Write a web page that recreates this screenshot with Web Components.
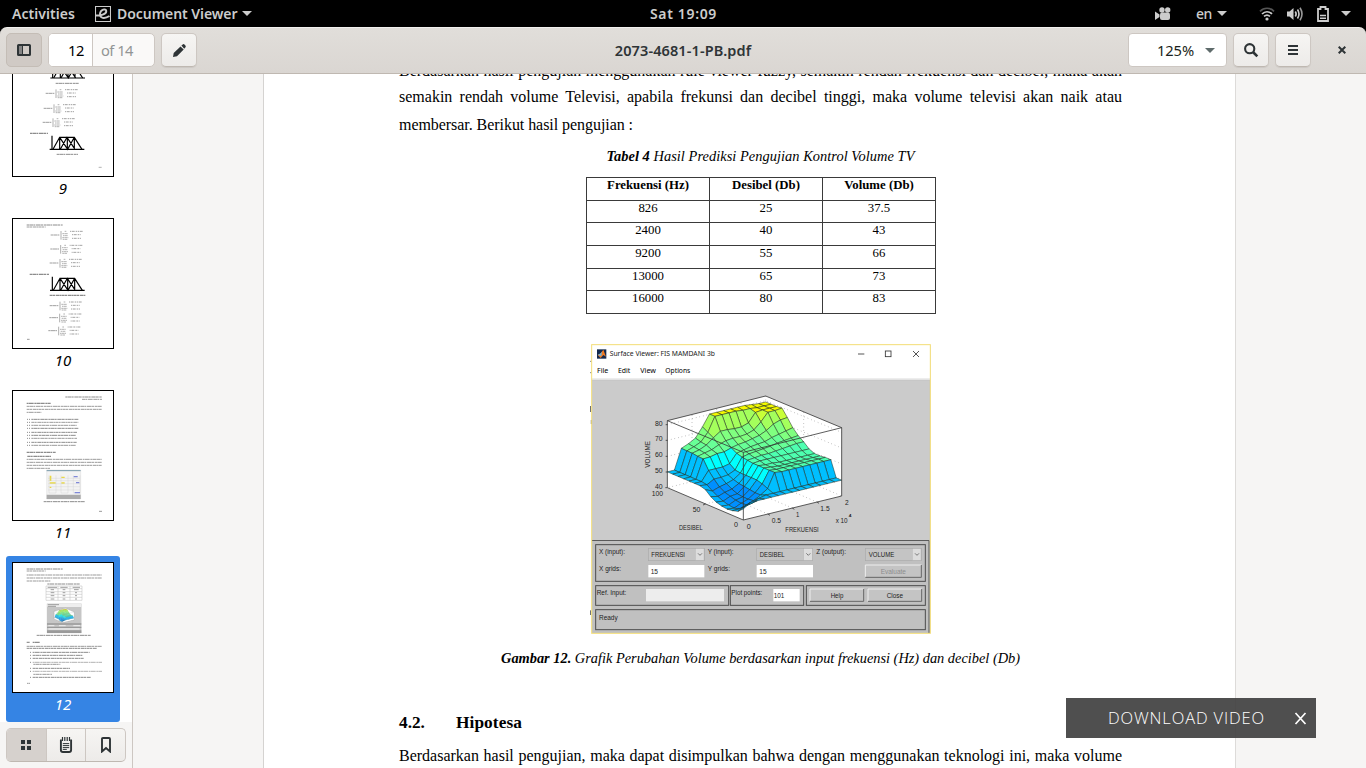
<!DOCTYPE html>
<html lang="id">
<head>
<meta charset="utf-8">
<title>2073-4681-1-PB.pdf</title>
<style>
html,body{margin:0;height:100%;overflow:hidden;background:#000}
body{font-family:"Noto Sans","Open Sans",sans-serif}
</style>
</head>
<body>
<viewer-desktop></viewer-desktop>
<script>
function define(name, html, setup) {
  customElements.define(name, class extends HTMLElement {
    connectedCallback() {
      if (this.shadowRoot) return;
      const root = this.attachShadow({mode: 'open'});
      root.innerHTML = typeof html === 'function' ? html(this) : html;
      if (setup) setup(this, root);
    }
  });
}

/* A single line of text whose tracking (or word gaps, with the "words" attribute) is adjusted to reach a given width. */
define('fit-text', '<style>:host{display:inline-block;white-space:nowrap}span{white-space:pre}</style><span><slot></slot></span>', (el, root) => {
  const w = parseFloat(el.getAttribute('w'));
  const span = root.querySelector('span');
  const text = el.textContent;
  const natural = span.getBoundingClientRect().width;
  if (w && natural) {
    if (el.hasAttribute('words')) span.style.wordSpacing = ((w - natural) / (text.split(' ').length - 1)).toFixed(3) + 'px';
    else span.style.letterSpacing = ((w - natural) / text.length).toFixed(3) + 'px';
  }
  el.style.width = w + 'px';
});

/* ---------- top panel ---------- */
define('top-panel', `<style>
:host{display:grid;grid-template-columns:1fr auto 1fr;align-items:center;height:27px;background:#000;color:#ccc;font:600 14px/27px "Noto Sans",sans-serif}
.l,.r{display:flex;align-items:center;height:27px}
.l{padding-left:12px}.r{justify-content:flex-end;padding-right:15px}
svg{display:block;flex:none}
</style>
<div class="l"><fit-text w="63">Activities</fit-text>
<svg style="margin-left:20px" width="16" height="16" viewBox="0 0 16 16" fill="none" stroke="#ccc"><path d="M.5 .5h15v15H.5z" stroke-width="1.1"/><path d="M1 9.500C5 9.800 11.500 8.500 11.300 5c-.2-2.800-5.800-1.600-6.300 2.700C4.600 12.500 9.500 13.200 14.500 10" stroke-width="1.900"/></svg>
<fit-text w="120.500" style="margin-left:6px">Document Viewer</fit-text>
<svg style="margin-left:4.500px" width="10" height="5" viewBox="0 0 10 5"><path d="M0 0h10L5 5z" fill="#ccc"/></svg></div>
<div style="padding-left:1px"><fit-text w="67">Sat 19:09</fit-text></div>
<div class="r">
<svg width="16" height="14" viewBox="0 0 16 14" fill="#ccc"><circle cx="7" cy="3" r="2.700"/><circle cx="12.700" cy="3" r="2.700"/><rect x="5" y="5.500" width="10" height="7.500" rx="2"/><path d="M0 4.500l4.500 3v2.500L0 13z"/></svg>
<fit-text w="16" style="margin-left:25px;font-weight:500">en</fit-text>
<svg style="margin-left:5px" width="10" height="5" viewBox="0 0 10 5"><path d="M0 0h10L5 5z" fill="#ccc"/></svg>
<svg style="margin-left:32px" width="16" height="14" viewBox="0 0 16 14" fill="none" stroke="#ccc" stroke-width="1.700"><path d="M1 4.300C5 .2 11 .2 15 4.300" stroke="#555"/><path d="M3 7c3-3 7-3 10 0M5 9.400c2-1.700 4-1.700 6 0"/><circle cx="8" cy="12" r="1.600" fill="#ccc" stroke="none"/></svg>
<svg style="margin-left:12px" width="16" height="16" viewBox="0 0 16 16" fill="none" stroke="#ccc" stroke-width="1.600"><path d="M0 5.500h2.500L6.500 2v12L2.500 10.500H0z" fill="#ccc" stroke="none"/><path d="M8.300 5.500q1.700 2.500 0 5M10.500 3.500q3 4.500 0 9"/><path d="M13 1.700q4 6.300 0 12.600" stroke="#999"/></svg>
<svg style="margin-left:14px" width="12" height="16" viewBox="0 0 12 16" fill="none" stroke="#ccc" stroke-width="1.800"><path d="M1 3h2.500V1h5v2H11v12H1z"/><path d="M3 9.500h6M3 12.300h6" stroke-width="1.500"/></svg>
<svg style="margin-left:12px" width="10" height="5" viewBox="0 0 10 5"><path d="M0 0h10L5 5z" fill="#ccc"/></svg>
</div>`);

/* ---------- window header ---------- */
define('tool-button', `<style>
:host{display:flex;align-items:center;justify-content:center;box-sizing:border-box;width:36px;height:34px;border:1px solid #cdc7c2;border-bottom-color:#bfb8b1;border-radius:5px;background:linear-gradient(#f6f5f3,#edebe9);box-shadow:0 1px 1px rgba(0,0,0,.07)}
:host([active]){background:#d0cac5;border-color:#c4bdb6;box-shadow:none}
:host([flat]){background:none;border-color:transparent;box-shadow:none}
</style><slot></slot>`);

define('header-bar', `<style>
:host{display:grid;grid-template-columns:1fr auto 1fr;align-items:center;box-sizing:border-box;height:47px;padding:0 6px 1px;border-radius:7px 7px 0 0;border-top:1px solid #f2f0ee;border-bottom:1px solid #bfb8b1;background:linear-gradient(#e1deda,#dad6d2);color:#2e3436;font:14.700px/32px "Noto Sans",sans-serif}
.l,.r{display:flex;align-items:center}.r{justify-content:flex-end}
.entry{display:flex;box-sizing:border-box;width:107px;height:34px;margin:0 6px;border:1px solid #cdc7c2;border-radius:5px;overflow:hidden;background:#faf9f8}
.num{box-sizing:border-box;width:44px;background:#fff;border-right:1px solid #cdc7c2;text-align:right;padding-right:8px;color:#000}
.of{padding-left:8px;color:#929595}
.zoom{box-sizing:border-box;width:99px;height:34px;border:1px solid #cdc7c2;border-radius:4px;background:#fff;display:flex;align-items:center;justify-content:flex-end;padding-right:11px;color:#1b1f20}
.title{font-weight:600;font-size:14.500px}
svg{display:block}
</style>
<div class="l">
<tool-button active><svg width="14" height="12" viewBox="0 0 14 12"><rect x="1" y="1" width="12" height="10" rx=".6" fill="none" stroke="#2e3436" stroke-width="2"/><path d="M2 2h3v8H2z" fill="#858585"/><path d="M5 2h1v8H5z" fill="#2e3436"/></svg></tool-button>
<div class="entry"><div class="num"><fit-text w="16">12</fit-text></div><div class="of"><fit-text w="32">of 14</fit-text></div></div>
<tool-button><svg width="13" height="13" viewBox="0 0 13 13" fill="#2e3436"><path d="M0 13l.7-4L7.500 2.400l3.200 3.200L4 12.200zM8.400 1.600L9.700.4q1-.7 2 .3l.7.8q.8 1-.1 1.900l-1.100 1.300z"/></svg></tool-button>
</div>
<div class="title"><fit-text w="136.500">2073-4681-1-PB.pdf</fit-text></div>
<div class="r">
<div class="zoom"><fit-text w="37">125%</fit-text><svg style="margin-left:11px" width="10" height="5" viewBox="0 0 10 5"><path d="M0 0h10L5 5z" fill="#5f6b6b"/></svg></div>
<tool-button style="margin-left:6px"><svg width="16" height="16" viewBox="0 0 16 16" fill="none" stroke="#2e3436"><circle cx="6.700" cy="6.700" r="4.600" stroke-width="2.100"/><path d="M10 10l4.300 4.300" stroke-width="2.600"/></svg></tool-button>
<tool-button style="margin-left:6px"><svg width="10" height="10" viewBox="0 0 10 10"><path d="M0 0h10v2H0zM0 4h10v2H0zM0 8h10v2H0z" fill="#2e3436"/></svg></tool-button>
<tool-button flat style="margin-left:13px"><svg width="8" height="8" viewBox="0 0 8 8"><path d="M.7.7l6.600 6.600M7.300.7L.7 7.300" stroke="#2e3436" stroke-width="2"/></svg></tool-button>
</div>`);

/* ---------- surface mesh ---------- */
function surfaceMesh() {
  const Z = [
    [47,44,43,42.500,43,44,46,49,50,50,50,50,50,50,50],
    [50,46,43,42,42.500,43.500,45,47,49.500,50,50,50,50,50,50],
    [50,47,44.500,44,44.500,45.500,46.500,48.500,52,56,61.800,62,62.500,62.500,62.700],
    [50,49,46,45.500,45.500,46,47.500,49.500,52,56,62,63,63.500,64,64.500],
    [50,50,48.500,48.500,49,49.500,50,51,52.500,56,63,64,65.500,66,67],
    [50,50,51.500,53,54,54,54,54,54.500,57,63,66,69,71,73],
    [50,50,60.600,60.500,60.500,60.500,60.500,61,61.500,62.500,64.500,67.500,72,80,80],
    [50,50,60,60,60,60,61,61.500,62.500,63.500,65.500,68,72,80,80],
    [50,50,60,60,59.500,60,61,62,63,64.500,66,68,71.500,80,80],
    [50,50,60,60,59.500,59.500,61,62,63.500,65,67,68.500,71.500,80,80],
    [50,50,60,60,59.500,59.500,61,62.500,64,65.500,68,70,73,79.500,80],
    [50,50,60,60,59.500,59.500,61,63,65,67,70,74,78.500,79.500,80],
    [50,50,60,60,59.500,59.500,61,63.500,65.500,68,73,79,79,79,79.500],
    [50,50,60,60,59.500,59.500,61,64,66,69,74.500,79,79,79,79],
    [50,50,60,60,59.500,59.500,61,64,66.500,70,75,79.500,79,79,79]];
  const P = (i, j) => {
    const u = i / 14, v = j / 14;
    return [310 + 295*u - 228*v, 390 - 72*u - 97*v - 4.75*(Z[i][j] - 40)].map(n => n.toFixed(1)).join(',');
  };
  const colour = (z, i) => i === 0 ? '#00b2ff' : z < 47.2 ? '#008fff' : z < 49 ? '#00a8ff' : z < 52.8 ? '#00bfff' : z < 57.5 ? '#00ffff' : z < 61.5 ? '#4effb0' : z < 65.3 ? '#68ff97' : z < 69 ? '#80ff80' : z < 74 ? '#a4ff5c' : z < 78 ? '#c8ff38' : '#f4fa00';
  let out = '';
  for (let s = 26; s >= 0; s--) for (let i = Math.min(13, s); i >= 0; i--) {
    const j = s - i;
    if (j > 13 || j < 0) continue;
    out += `<polygon points="${P(i,j)} ${P(i+1,j)} ${P(i+1,j+1)} ${P(i,j+1)}" fill="${colour(Z[i][j], i && j > 0 ? i : j < 9 && i < 6 ? 0 : 1)}"/>`;
  }
  return out;
}
const plot = `<polygon points="82,92 377,18 605,113 605,318 310,390 82,293" fill="#fff"/>
<g fill="none" stroke="#777" stroke-width="2" stroke-dasharray="2 9"><path d="M82 246L377 174L605 269M82 199L377 127L605 222M82 151L377 79L605 174M82 104L377 32L605 127M156 275V74M230 257V56M303 239V37M491 66V269M377 18V221M377 221L82 293M377 221L605 318M384 372L156 275M457 354L230 257M531 336L303 239M196 342L491 269"/></g>
<g stroke="#1c2a1c" stroke-opacity=".8" stroke-width="1.900" stroke-linejoin="round">${surfaceMesh()}</g>
<path d="M82 92L377 18L605 113V318L310 390L82 293zM82 92L310 187L605 113M310 187V390M384 372l6 4M457 354l6 4M531 336l6 4M196 342l-7 3M82 246h-5M82 199h-5M82 151h-5M82 104h-5M82 293h-6" fill="none" stroke="#333" stroke-width="2.400"/>`;

/* ---------- embedded MATLAB figure ---------- */
define('surface-figure', () => {
  const t = (x, y, w, s, o = '') => `<text x="${x}" y="${y}" textLength="${w}" lengthAdjust="spacingAndGlyphs" ${o}>${s}</text>`;
  const frame = (x, y, w, h) => `<rect x="${x}" y="${y}" width="${w}" height="${h}" fill="none" stroke="#4c4c4c" stroke-width="3"/>`;
  const drop = (x, w) => `<rect x="${x}" y="625" width="${w}" height="37" fill="#c4c4c4" stroke="#aaa" stroke-width="2"/><rect x="${x+w-27}" y="626" width="26" height="35" fill="#ddd" stroke="#aaa"/><path d="M${x+w-19} 640l6 6 6-6" fill="none" stroke="#777" stroke-width="3"/>`;
  const btn = (x, y, w, h) => `<rect x="${x}" y="${y}" width="${w}" height="${h}" fill="#c4c4c4"/><path d="M${x} ${y+h}V${y}H${x+w}" fill="none" stroke="#eee" stroke-width="3"/><path d="M${x} ${y+h}H${x+w}V${y}" fill="none" stroke="#666" stroke-width="3"/>`;
  return `<style>:host{display:block;width:341px;height:290px}svg{display:block;font-family:"Liberation Sans",Arial,sans-serif}</style>
<svg width="341" height="290" viewBox="30 12 1023 870" font-size="21" fill="#1c1c1c">
<path d="M31 64h3M31 98h3M31 198v18M34 240v12M31 811v14" stroke="#555" stroke-width="3"/>
<rect x="36" y="15" width="1015" height="864" fill="#c0c0c0"/>
<rect x="36" y="15" width="1015" height="103" fill="#fff"/><path d="M36 117h1014" stroke="#e7e7e7" stroke-width="5"/>
<rect x="36" y="121" width="1013" height="479" fill="#cbcbcb"/>
<rect x="51" y="28" width="28" height="28" fill="#142a4d"/><path d="M53 45l9-5 8-11 8 21-8-5-8 9z" fill="#f27b22"/><path d="M53 45l9-5 4-5-2 13z" fill="#69b5df"/>
<g font-family="Noto Sans" fill="#222">${t(89,49,316,'Surface Viewer: FIS MAMDANI 3b')}${t(51,100,34,'File','fill="#000"')}${t(114,100,37,'Edit','fill="#000"')}${t(181,100,47,'View','fill="#000"')}${t(256,100,75,'Options','fill="#000"')}</g>
<path d="M834 42h19M999 33l18 18M1017 33l-18 18" stroke="#333" stroke-width="2.500"/><rect x="916" y="33" width="17" height="17" fill="none" stroke="#333" stroke-width="2.500"/>
<g transform="translate(180 150)">${plot}
<g fill="#222">${t(45,107,23,'80')}${t(45,154,23,'70')}${t(45,201,23,'60')}${t(45,249,23,'50')}${t(45,296,23,'40')}${t(35,318,34,'100')}${t(158,366,23,'50')}${t(282,412,12,'0')}${t(320,416,12,'0')}${t(395,398,28,'0.5')}${t(468,380,10,'1')}${t(541,362,28,'1.5')}${t(615,344,11,'2')}${t(587,398,36,'x 10')}${t(626,382,8,'4','font-size="13" font-weight="bold"')}${t(117,420,71,'DESIBEL')}${t(436,426,100,'FREKUENSI')}<text transform="translate(31 233) rotate(-90)" textLength="80" lengthAdjust="spacingAndGlyphs">VOLUME</text></g></g>
<path d="M36 601.500H1047V879" fill="none" stroke="#5a5a5a" stroke-width="3"/>
${frame(47,614,989,110)}${frame(47,737,399,59)}${frame(451,737,220,59)}${frame(679,737,357,59)}${frame(47,809,989,60)}
${drop(205,168)}${drop(530,168)}${drop(856,168)}
<g fill="#fff"><rect x="205" y="675" width="168" height="37"/><rect x="530" y="675" width="169" height="37"/><rect x="580" y="747" width="79" height="37"/></g><rect x="198" y="747" width="234" height="37" fill="#ededed"/>
${btn(856,675,168,37)}${btn(690,747,161,37)}${btn(864,747,161,37)}
${t(57,643,78,'X (input):')}${t(383,643,78,'Y (input):')}${t(709,643,89,'Z (output):')}${t(214,652,101,'FREKUENSI')}${t(539,652,75,'DESIBEL')}${t(866,652,77,'VOLUME')}
${t(57,693,66,'X grids:')}${t(383,693,67,'Y grids:')}${t(212,701,22,'15')}${t(538,701,22,'15')}${t(902,702,76,'Evaluate','fill="#8d8d8d"')}
${t(50,766,89,'Ref. Input:')}${t(454,766,93,'Plot points:')}${t(581,774,32,'101')}${t(752,774,38,'Help')}${t(920,774,49,'Close')}${t(57,839,56,'Ready')}
<rect x="35" y="14" width="1016" height="866" fill="none" stroke="#f4dd75" stroke-width="3"/>
</svg>`;
});

/* ---------- page thumbnails ---------- */
function line(y, x1, x2, k = 0, w = 2.6) {
  const dashes = ['7 1 11 1 5 2 13 1 8 2', '9 1 6 2 12 1 4 1', '5 1 15 2 7 1 10 1 12 2'][k % 3];
  return `<path d="M${x1} ${y}H${x2}" stroke-width="${w}" stroke-dasharray="${dashes}"/>`;
}
const lines = list => list.map((a, k) => line(a[0], a[1], a[2], k, a[3])).join('');
function formula(x, y) {
  let s = `<path d="M${x} ${y+12}h26" stroke-width="2.500" stroke-dasharray="7 1 12 1"/><path d="M${x+31} ${y}v26" stroke="#888" stroke-width="2"/>`;
  s += `<path d="M${x+42} ${y+1}h6M${x+35} ${y+8}h17M${x+37} ${y+14}h14M${x+35} ${y+20}h18M${x+36} ${y+25}h15" stroke-width="2" stroke-dasharray="5 1 8 1"/>`;
  return s + `<path d="M${x+58} ${y+1}h38M${x+64} ${y+11}h26M${x+64} ${y+22}h27" stroke-width="2.400" stroke-dasharray="3 2 9 3 5 2"/>`;
}
const graph = (x, y) => `<g stroke="#000" fill="none" stroke-width="3.500"><path d="M${x+5} ${y}v42M${x-2} ${y+41}h104"/><path d="M${x+8} ${y+41}l20-36h44l23 36M${x+28} ${y+5}l24 36 20-36M${x+30} ${y+41}l20-36 24 36M${x+28} ${y+5}v36M${x+51} ${y+5}v36M${x+72} ${y+5}v36"/></g>`;
const thumbs = {
  '9': graph(117, 55) + lines([[112,131,200,3]]) + formula(101,130) + formula(95,175) + formula(92,217) + line(262,54,108,0,3.500) + graph(115,269) + lines([[325,134,198,3],[364,260,270,2]]),
  '10': lines([[21,44,152,3],[27,44,101,2.500]]) + formula(116,39) + formula(115,81) + formula(113,123) + line(169,53,112,0,3.500) + graph(116,176) + line(232,113,221,1,3.500) + formula(113,251) + formula(112,287) + formula(109,326) + line(364,45,54,0),
  '11': lines([[21,160,270,3],[28,210,270],[40,44,116,3.500],[49,44,270],[58,44,270],[67,44,88],[88,58,199,3],[97,58,199],[106,58,195],[115,58,199,3],[127,58,195,3],[136,58,192,3],[145,58,195],[157,58,194,3],[166,58,192],[187,44,131,4],[199,46,117,4],[208,44,270],[217,44,270],[226,44,270],[235,44,114]])
    + '<path d="M45 88h3M51 88h3M45 97h3M51 97h3M45 106h3M51 106h3M45 115h3M51 115h3M45 127h3M51 127h3M45 136h3M51 136h3M45 145h3M51 145h3M45 157h3M51 157h3M45 166h3M51 166h3" stroke-width="3"/>'
    + '<path d="M104 240h102v87H104z" fill="#f3f3f3" stroke="#ccc"/><path d="M104 242h102" stroke="#79a" stroke-width="3"/><path d="M113 257h5v16h-5zM113 277h18v4h-18zM148 260h10v4h-10zM148 277h10v4h-10zM113 290h5v4h-5z" fill="#ead93f" stroke="none"/><path d="M111 256v53h21v-53M147 256v53h21v-53M184 256v53h20v-53M108 265h96M108 272h96M108 281h96M108 290h96M108 300h96" stroke="#ccc" fill="none"/><path d="M185 260h12M192 278h10M188 308h16" stroke="#7f88d8" stroke-width="4"/><path d="M104 314h102v13H104z" fill="#aaa" stroke="none"/>'
    + lines([[335,95,219,3],[364,261,270]]),
  '12': lines([[21,44,152,3],[27,44,101],[39,44,270],[48,44,270],[57,44,116],[66,106,204,3]])
    + '<path d="M102 72h108v43H102zM138 72v43M174 72v43M102 80h108M102 89h108M102 97h108M102 106h108" fill="none" stroke="#bbb" stroke-width="1.500"/><path d="M107 76h28M145 76h22M182 76h22M116 83h10M152 83h8M186 83h14M116 92h11M152 92h8M189 92h6M116 101h11M152 101h8M189 101h6M116 111h11M152 111h8M189 111h6" stroke-width="2.500"/>'
    + `<path d="M105 125h103v88H105z" fill="#c6c6c6" stroke="#ccc"/><path d="M105 125h103v10H105z" fill="#eee" stroke="none"/><path d="M107 128h34M107 133h25" stroke-width="2.500"/><path d="M109 201h94" stroke="#eee" stroke-width="4"/><path d="M105 184h103v4H105zM105 194h103v4H105zM105 205h103v8H105z" fill="#9a9a9a" stroke="none"/><path d="M109 191h18M141 191h20M184 191h20" stroke="#eee" stroke-width="3"/><g transform="translate(117 137) scale(.115)">${plot}</g>`
    + lines([[220,74,237,3],[241,44,53,3.500],[241,62,84,3.500],[253,44,270],[259,44,255,3],[271,62,233,3],[280,62,211,3],[289,62,216,3],[301,62,270,2],[307,64,145],[319,62,174,3],[328,62,270,2],[337,64,120],[346,62,236,3],[364,45,54]])
    + '<path d="M54 271h3M54 280h3M54 289h3M54 301h3M54 319h3M54 328h3M54 346h3" stroke-width="3"/>'
};
define('page-thumb', el => `<style>
:host{display:block;box-sizing:border-box;width:114px;height:166px;padding:6px;border-radius:3px;flex:none;color:#000;font:italic 15px/22px "Noto Sans",sans-serif;text-align:center}
:host([selected]){background:#3584e4;color:#fff}
.p{box-sizing:border-box;height:131px;border:1px solid #000;background:#fff;overflow:hidden;color:#000}
svg{display:block;margin:-1px}
</style><div class="p"><svg width="102" height="131" viewBox="0 0 306 393" stroke="#8c8c8c">${thumbs[el.getAttribute('page')]}</svg></div>${el.getAttribute('page')}`);

define('side-pane', `<style>
:host{display:flex;flex-direction:column;box-sizing:border-box;width:133px;height:694px;border-right:1px solid #cdc7c2;background:#fff;overflow:hidden;flex:none}
.list{display:flex;flex-direction:column;justify-content:flex-end;gap:6px;height:648px;padding-left:6px;overflow:hidden}
.bar{box-sizing:border-box;height:46px;padding:6px;background:#f6f5f4;flex:none}
.seg{display:flex;box-sizing:border-box;width:120px;height:34px;border:1px solid #cdc7c2;border-bottom-color:#bfb8b1;border-radius:5px;overflow:hidden;background:linear-gradient(#f6f5f3,#edebe9)}
.seg div{flex:1;display:flex;align-items:center;justify-content:center;border-left:1px solid #cdc7c2}
.seg div:first-child{background:#d6d1cd;border-left:0}
</style>
<div class="list"><page-thumb page="9"></page-thumb><page-thumb page="10"></page-thumb><page-thumb page="11"></page-thumb><page-thumb page="12" selected></page-thumb></div>
<div class="bar"><div class="seg">
<div><svg width="10" height="10" fill="#2e3436"><path d="M0 0h4v4H0zM6 0h4v4H6zM0 6h4v4H0zM6 6h4v4H6z"/></svg></div>
<div><svg width="14" height="16" viewBox="0 0 14 16" fill="none" stroke="#2e3436"><path d="M1.900 2.500V13q0 2 2 2h6.200q2 0 2-2V2.500" stroke-width="1.900"/><path d="M3.500 0v4M5.800 0v4M8.200 0v4M10.500 0v4" stroke-width="1.200"/><path d="M3.800 6.600h6.400M3.800 8.600h6.400M3.800 10.600h6.400M3.800 12.400h4" stroke-width="1"/></svg></div>
<div><svg width="10" height="16" viewBox="0 0 10 16" fill="none" stroke="#2e3436" stroke-width="1.900"><path d="M1 14.500V2q0-1 1-1h6q1 0 1 1v12.500L5 11z"/></svg></div>
</div></div>`);

/* ---------- document page ---------- */
define('data-table', () => {
  const rows = [['Frekuensi (Hz)','Desibel (Db)','Volume (Db)'],['826','25','37.5'],['2400','40','43'],['9200','55','66'],['13000','65','73'],['16000','80','83']];
  return `<style>
:host{display:block;width:350px}
table{border-collapse:collapse;table-layout:fixed;width:350px;height:137px;font-size:12.800px;text-align:center}
td,th{border:1px solid #3a3a3a;padding:0;vertical-align:top;height:21.650px;line-height:14.500px}
</style><table><colgroup><col style="width:123px"><col style="width:113px"><col style="width:113px"></colgroup>${rows.map((r, i) => '<tr>' + r.map(c => i ? `<td>${c}</td>` : `<th>${c}</th>`).join('') + '</tr>').join('')}</table>`;
});

define('pdf-page', `<style>
:host{display:block;box-sizing:border-box;width:973px;height:694px;padding:0 113px 0 135px;background:#fff;border-left:1px solid #d5d3d1;border-right:1px solid #dddbd9;color:#000;font:16px/28px "Liberation Serif","Times New Roman",serif;overflow:hidden}
.body{margin-top:-17.500px}
p{margin:0;height:27.900px;white-space:nowrap}
p.first{height:26.800px}
.c{display:flex;justify-content:center;font-size:14.400px;font-style:italic;line-height:20px;height:20px}
h2{display:flex;margin:0;font-size:17.300px;line-height:24px;height:24px}
data-table{margin:11px auto 0 187px}
surface-figure{margin:30px 0 0 191px}
</style>
<div class="body">
<p class="first"><fit-text words w="723">Berdasarkan hasil pengujian menggunakan rule viewer fuzzy, semakin rendah frekuensi dan decibel, maka akan</fit-text></p>
<p><fit-text words w="723">semakin rendah volume Televisi, apabila frekunsi dan decibel tinggi, maka volume televisi akan naik atau</fit-text></p>
<p><fit-text w="234">membersar. Berikut hasil pengujian :</fit-text></p>
<div class="c" style="margin-top:7px"><fit-text w="308"><b>Tabel 4</b> Hasil Prediksi Pengujian Kontrol Volume TV</fit-text></div>
<data-table></data-table>
<surface-figure></surface-figure>
<div class="c" style="margin-top:14px"><fit-text w="519"><b>Gambar 12.</b> Grafik Perubahan Volume berdasarkan input frekuensi (Hz) dan decibel (Db)</fit-text></div>
<h2 style="margin-top:43px"><span style="width:57px">4.2.</span><fit-text w="66">Hipotesa</fit-text></h2>
<p style="margin-top:7px"><fit-text words w="723">Berdasarkan hasil pengujian, maka dapat disimpulkan bahwa dengan menggunakan teknologi ini, maka volume</fit-text></p>
</div>`);

/* ---------- floating download bar ---------- */
define('download-toast', `<style>
:host{display:flex;align-items:center;box-sizing:border-box;width:250px;height:40px;padding:0 9px 0 42px;background:rgba(64,64,64,.92);color:#fff;font:300 16.500px/40px "Open Sans",sans-serif;justify-content:space-between}
</style><fit-text w="157">DOWNLOAD VIDEO</fit-text><svg width="13" height="13" viewBox="0 0 13 13"><path d="M1.500 1l10 11M11.500 1l-10 11" stroke="#fff" stroke-width="1.700"/></svg>`);

define('viewer-desktop', `<style>
:host{display:block;width:1366px;height:768px;overflow:hidden;position:relative;background:#000}
.main{display:flex;height:694px;background:#f6f5f4}
pdf-page{margin-left:130px}
download-toast{position:absolute;left:1066px;top:698px}
</style>
<top-panel></top-panel><header-bar></header-bar>
<div class="main"><side-pane></side-pane><pdf-page></pdf-page></div>
<download-toast></download-toast>`);
</script>
</body>
</html>
